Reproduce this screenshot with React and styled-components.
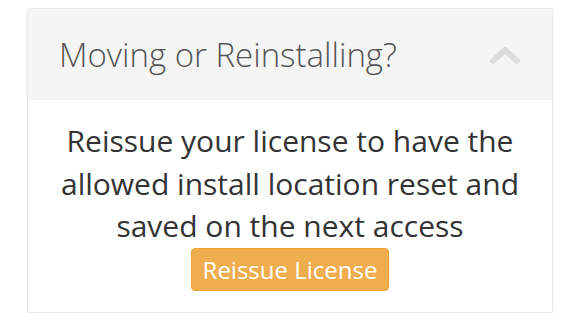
import styled, { createGlobalStyle } from "styled-components";

const GlobalStyle = createGlobalStyle`
  body {
    margin: 0;
    background: #fff;
    font-family: "Open Sans", "Liberation Sans", sans-serif;
  }
`;

const Page = styled.div`
  padding: 8px 19px 0 27px;
`;

const Panel = styled.section`
  width: 524px;
  border: 1px solid #e8e8e8;
  border-radius: 2px;
  background: #fff;
  box-shadow: 0 1px 2px rgba(0, 0, 0, 0.06);
`;

const Header = styled.div`
  height: 91px;
  background: #f5f5f5;
  display: flex;
  align-items: center;
  justify-content: space-between;
  padding: 0 32px 0 31px;
  box-sizing: border-box;
`;

const Title = styled.h3`
  margin: 0;
  font-weight: 300;
  font-size: 33px;
  color: #555;
`;

const Body = styled.div`
  padding: 20px 20px 21px;
  text-align: center;
`;

const Text = styled.p`
  margin: 0;
  font-size: 30px;
  line-height: 42.5px;
  color: #333;
`;

const Button = styled.button`
  font-family: inherit;
  font-size: 24px;
  color: #fff;
  background: #f0ad4e;
  border: 1px solid #eea236;
  border-radius: 4px;
  padding: 0 11px;
  height: 43px;
  cursor: pointer;
`;

const Chevron = () => (
  <svg width="30" height="18" viewBox="0 0 30 18">
    <path d="M3 15 L15 4 L27 15" fill="none" stroke="#ddd" strokeWidth="6" strokeLinecap="round" strokeLinejoin="round" />
  </svg>
);

export default function App() {
  return (
    <>
      <GlobalStyle />
      <Page>
        <Panel>
          <Header>
            <Title>Moving or Reinstalling?</Title>
            <Chevron />
          </Header>
          <Body>
            <Text>
              Reissue your license to have the allowed install location reset and saved on the next access
            </Text>
            <Button>Reissue License</Button>
          </Body>
        </Panel>
      </Page>
    </>
  );
}
